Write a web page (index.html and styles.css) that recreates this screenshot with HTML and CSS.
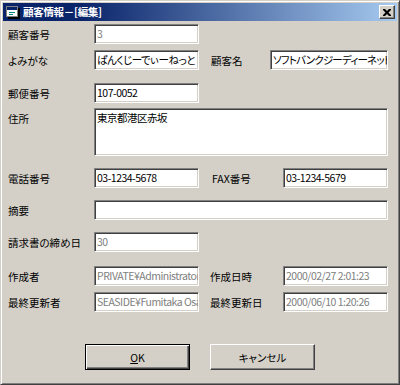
FILE: index.html
```html
<!DOCTYPE html>
<html lang="ja">
<head>
    <meta charset="UTF-8">
    <title>顧客情報－[編集]</title>
    <link rel="stylesheet" href="styles.css">
</head>
<body>
    <div class="window">
        <div class="titlebar">
            <svg class="app-icon" width="14" height="13" viewBox="0 0 14 13">
                <rect x="2" y="2" width="12" height="11" fill="#000"/>
                <rect x="0.5" y="0.5" width="11" height="10" fill="#fff" stroke="#808080"/>
                <rect x="1" y="1" width="10" height="3" fill="#0a246a"/>
                <rect x="3" y="6" width="6" height="1" fill="#008080"/>
                <rect x="3" y="8" width="4" height="1" fill="#008080"/>
            </svg>
            <span class="title">顧客情報－[編集]</span>
            <div class="close-btn">
                <svg width="8" height="7" viewBox="0 0 8 7">
                    <path d="M0 0h2l2 2 2-2h2v1l-2.5 2.5L8 6v1H6L4 5 2 7H0V6l2.5-2.5L0 1z" fill="#000"/>
                </svg>
            </div>
        </div>

        <div class="form">
            <div class="row r1">
                <span class="lbl col1">顧客番号</span>
                <div class="edit short disabled">3</div>
            </div>
            <div class="row r2">
                <span class="lbl col1">よみがな</span>
                <div class="edit short">ぱんくじーでぃーねっと</div>
                <span class="lbl name-lbl">顧客名</span>
                <div class="edit name">ソフトバンクジーディーネット</div>
            </div>
            <div class="row r3">
                <span class="lbl col1">郵便番号</span>
                <div class="edit short">107-0052</div>
            </div>
            <div class="row r4 tall">
                <span class="lbl col1">住所</span>
                <div class="edit wide multi">東京都港区赤坂</div>
            </div>
            <div class="row r5">
                <span class="lbl col1">電話番号</span>
                <div class="edit short">03-1234-5678</div>
                <span class="lbl fax-lbl">FAX番号</span>
                <div class="edit right">03-1234-5679</div>
            </div>
            <div class="row r6">
                <span class="lbl col1">摘要</span>
                <div class="edit wide"></div>
            </div>
            <div class="row r7">
                <span class="lbl col1">請求書の締め日</span>
                <div class="edit short disabled">30</div>
            </div>
            <div class="row r8">
                <span class="lbl col1">作成者</span>
                <div class="edit short disabled">PRIVATE¥Administrator</div>
                <span class="lbl date-lbl">作成日時</span>
                <div class="edit right disabled">2000/02/27 2:01:23</div>
            </div>
            <div class="row r9">
                <span class="lbl col1">最終更新者</span>
                <div class="edit short disabled">SEASIDE¥Fumitaka Osawa</div>
                <span class="lbl date-lbl">最終更新日</span>
                <div class="edit right disabled">2000/06/10 1:20:26</div>
            </div>
        </div>

        <div class="buttons">
            <button class="btn default"><u>O</u>K</button>
            <button class="btn">キャンセル</button>
        </div>
    </div>
</body>
</html>
```

FILE: styles.css
```css
body {
    margin: 0;
    padding: 0;
    width: 400px;
    height: 385px;
    background: #d4d0c8;
    font-family: "Noto Sans CJK JP", sans-serif;
    font-size: 10.5px;
    font-feature-settings: "palt";
    color: #000;
}
.window {
    box-sizing: border-box;
    width: 400px;
    height: 385px;
    padding: 3px;
    background: #d4d0c8;
    border-top: 1px solid #d4d0c8;
    border-left: 1px solid #d4d0c8;
    border-right: 1px solid #404040;
    border-bottom: 1px solid #404040;
    box-shadow: inset 1px 1px 0 #fff, inset -1px -1px 0 #808080;
}
.titlebar {
    height: 18px;
    margin: -1px -1px 0 -1px;
    display: flex;
    align-items: center;
    padding: 0 2px 0 3px;
    background: linear-gradient(90deg, #0a246a 0%, #0a246a 20%, #a6caf0 100%);
}
.app-icon {
    flex: none;
}
.title {
    margin-left: 3px;
    color: #fff;
    font-weight: bold;
    font-size: 10.5px;
    letter-spacing: -0.3px;
    line-height: 18px;
    flex: 1;
}
.close-btn {
    box-sizing: border-box;
    width: 16px;
    height: 14px;
    display: flex;
    align-items: center;
    justify-content: center;
    background: #d4d0c8;
    border-top: 1px solid #fff;
    border-left: 1px solid #fff;
    border-right: 1px solid #404040;
    border-bottom: 1px solid #404040;
    box-shadow: inset -1px -1px 0 #808080;
}
.form {
    padding: 3px 0 0 4px;
}
.row {
    display: flex;
    align-items: flex-start;
    height: 20px;
}
.row.tall {
    height: 48px;
}
.r1 { margin-top: 0; }
.r2 { margin-top: 6px; }
.r3 { margin-top: 13px; }
.r4 { margin-top: 5px; }
.r5 { margin-top: 12px; }
.r6 { margin-top: 12px; }
.r7 { margin-top: 12px; }
.r8 { margin-top: 14px; }
.r9 { margin-top: 6px; }
.lbl {
    flex: none;
    line-height: 22px;
    white-space: nowrap;
}
.col1 {
    width: 86px;
}
.name-lbl {
    margin-left: 12px;
    width: 59px;
}
.fax-lbl {
    margin-left: 13px;
    width: 71px;
}
.date-lbl {
    margin-left: 11px;
    width: 73px;
}
.edit {
    flex: none;
    box-sizing: border-box;
    height: 20px;
    padding: 1px 1px 0 2px;
    overflow: hidden;
    white-space: nowrap;
    line-height: 15px;
    letter-spacing: -0.5px;
    background: #fff;
    border-top: 1px solid #808080;
    border-left: 1px solid #808080;
    border-right: 1px solid #fff;
    border-bottom: 1px solid #fff;
    box-shadow: inset 1px 1px 0 #404040, inset -1px -1px 0 #d4d0c8;
}
.edit.short {
    width: 105px;
}
.edit.name {
    width: 118px;
    letter-spacing: -0.8px;
}
.edit.right {
    width: 105px;
}
.edit.wide {
    width: 294px;
}
.edit.multi {
    height: 48px;
}
.edit.disabled {
    color: #808080;
}
.buttons {
    display: flex;
    justify-content: center;
    gap: 20px;
    margin-top: 32px;
}
.btn {
    box-sizing: border-box;
    width: 105px;
    height: 26px;
    padding: 0;
    font-family: "Noto Sans CJK JP", sans-serif;
    font-size: 10.5px;
    font-feature-settings: "palt";
    color: #000;
    background: #d4d0c8;
    border-top: 1px solid #fff;
    border-left: 1px solid #fff;
    border-right: 1px solid #404040;
    border-bottom: 1px solid #404040;
    box-shadow: inset -1px -1px 0 #808080;
}
.btn.default {
    border: 1px solid #000;
    box-shadow: inset 1px 1px 0 #fff, inset -1px -1px 0 #404040, inset -2px -2px 0 #808080;
}
```
